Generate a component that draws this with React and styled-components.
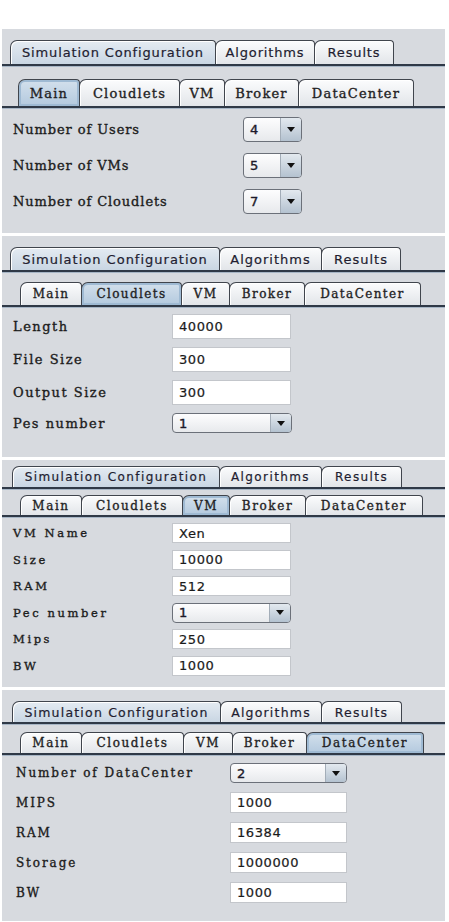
import React from "react";
import styled, { createGlobalStyle } from "styled-components";

const GlobalStyle = createGlobalStyle`
  html, body {
    margin: 0;
    padding: 0;
    background: #ffffff;
  }
  body {
    width: 449px;
    height: 922px;
    overflow: hidden;
  }
`;

const TOP_TABS = ["Simulation Configuration", "Algorithms", "Results"];
const SUB_TABS = ["Main", "Cloudlets", "VM", "Broker", "DataCenter"];

const screens = [
  {
    id: "main",
    height: 204,
    padTop: 11,
    topWidths: [206, 100, 80],
    topLeft: 8,
    topH: 24,
    topFont: 13,
    topSpacing: 0.85,
    subTop: 13,
    subWidths: [62, 101, 46, 75, 116],
    subLeft: 16,
    subH: 27,
    subFont: 13,
    subSpacing: 1.2,
    selected: 0,
    formTop: 9,
    labelLeft: 11,
    fieldLeft: 241,
    rowGap: 11,
    labelFont: 13,
    labelSpacing: 0.9,
    rows: [
      { label: "Number of Users", value: "4", combo: true, w: 59, h: 25 },
      { label: "Number of VMs", value: "5", combo: true, w: 59, h: 25 },
      { label: "Number of Cloudlets", value: "7", combo: true, w: 59, h: 25 },
    ],
  },
  {
    id: "cloudlets",
    height: 221,
    padTop: 11,
    topWidths: [210, 103, 80],
    topLeft: 8,
    topH: 23,
    topFont: 13,
    topSpacing: 1,
    subTop: 10,
    subWidths: [62, 101, 49, 76, 117],
    subLeft: 18,
    subH: 23,
    subFont: 12,
    subSpacing: 1.4,
    selected: 1,
    formTop: 7,
    labelLeft: 11,
    fieldLeft: 170,
    rowGap: 8,
    labelFont: 13,
    labelSpacing: 1.5,
    rows: [
      { label: "Length", value: "40000", w: 119, h: 25 },
      { label: "File Size", value: "300", w: 119, h: 25 },
      { label: "Output Size", value: "300", w: 119, h: 25 },
      { label: "Pes number", value: "1", combo: true, w: 120, h: 20 },
    ],
  },
  {
    id: "vm",
    height: 227,
    padTop: 6,
    topWidths: [208, 103, 81],
    topLeft: 10,
    topH: 21,
    topFont: 12,
    topSpacing: 1.4,
    subTop: 6,
    subWidths: [62, 102, 48, 77, 118],
    subLeft: 18,
    subH: 20,
    subFont: 12,
    subSpacing: 1.6,
    selected: 2,
    formTop: 6,
    labelLeft: 11,
    fieldLeft: 170,
    rowGap: 6.5,
    labelFont: 11.5,
    labelSpacing: 2.6,
    rows: [
      { label: "VM Name", value: "Xen", w: 119, h: 20 },
      { label: "Size", value: "10000", w: 119, h: 20 },
      { label: "RAM", value: "512", w: 119, h: 20 },
      { label: "Pec number", value: "1", combo: true, w: 119, h: 20 },
      { label: "Mips", value: "250", w: 119, h: 20 },
      { label: "BW", value: "1000", w: 119, h: 20 },
    ],
  },
  {
    id: "datacenter",
    height: 231,
    padTop: 11,
    topWidths: [209, 102, 81],
    topLeft: 10,
    topH: 21,
    topFont: 12.5,
    topSpacing: 1.2,
    subTop: 8,
    subWidths: [62, 103, 50, 75, 118],
    subLeft: 18,
    subH: 21,
    subFont: 12,
    subSpacing: 1.6,
    selected: 4,
    formTop: 8,
    labelLeft: 14,
    fieldLeft: 228,
    rowGap: 9,
    labelFont: 12,
    labelSpacing: 1.9,
    rows: [
      { label: "Number of DataCenter", value: "2", combo: true, w: 117, h: 20 },
      { label: "MIPS", value: "1000", w: 117, h: 21 },
      { label: "RAM", value: "16384", w: 117, h: 21 },
      { label: "Storage", value: "1000000", w: 117, h: 21 },
      { label: "BW", value: "1000", w: 117, h: 21 },
    ],
  },
];

const App = () => {
  return (
    <Page>
      <GlobalStyle />
      {screens.map((s) => (
        <Screen key={s.id} $height={s.height} $padTop={s.padTop}>
          <TabBar $left={s.topLeft}>
            {TOP_TABS.map((t, i) => (
              <Tab
                key={t}
                $w={s.topWidths[i]}
                $h={s.topH}
                $selected={i === 0}
                $first={i === 0}
              >
                <TopTabLabel $size={s.topFont} $spacing={s.topSpacing}>
                  {t}
                </TopTabLabel>
              </Tab>
            ))}
          </TabBar>

          <SubTabBar $left={s.subLeft} $top={s.subTop}>
            {SUB_TABS.map((t, i) => (
              <SubTab
                key={t}
                $w={s.subWidths[i]}
                $h={s.subH}
                $selected={i === s.selected}
                $first={i === 0}
              >
                <SubTabLabel $size={s.subFont} $spacing={s.subSpacing}>
                  {t}
                </SubTabLabel>
              </SubTab>
            ))}
          </SubTabBar>

          <Form $top={s.formTop} $left={s.labelLeft} $gap={s.rowGap}>
            {s.rows.map((r) => (
              <Row key={r.label}>
                <Label
                  $w={s.fieldLeft - s.labelLeft}
                  $size={s.labelFont}
                  $spacing={s.labelSpacing}
                >
                  {r.label}
                </Label>
                {r.combo ? (
                  <Combo $w={r.w} $h={r.h}>
                    <ComboValue>{r.value}</ComboValue>
                    <ArrowButton>
                      <Arrow />
                    </ArrowButton>
                  </Combo>
                ) : (
                  <TextField $w={r.w} $h={r.h}>
                    {r.value}
                  </TextField>
                )}
              </Row>
            ))}
          </Form>
        </Screen>
      ))}
    </Page>
  );
};

const Page = styled.div`
  display: flex;
  flex-direction: column;
  gap: 3px;
  padding: 29px 0 0 2px;
  width: 443px;
`;

const Screen = styled.section`
  height: ${({ $height }) => $height}px;
  padding-top: ${({ $padTop }) => $padTop}px;
  box-sizing: border-box;
  background: #d7dadf;
  overflow: hidden;
`;

const TabBar = styled.div`
  display: flex;
  align-items: flex-end;
  padding-left: ${({ $left }) => $left}px;
  border-bottom: 2px solid #2f3947;
  box-shadow: 0 1px 0 #a7b6c6;
`;

const Tab = styled.div`
  width: ${({ $w }) => $w}px;
  height: ${({ $h }) => $h}px;
  box-sizing: border-box;
  margin-left: ${({ $first }) => ($first ? 0 : -1)}px;
  display: flex;
  align-items: center;
  justify-content: center;
  border: 1px solid #40454d;
  border-bottom: none;
  border-radius: 7px 4px 0 0;
  background: ${({ $selected }) =>
    $selected
      ? "linear-gradient(#e4ebf2, #c9d6e3)"
      : "linear-gradient(#fbfcfd, #e2e5e9)"};
  box-shadow: inset 1px 1px 0 #ffffff;
`;

const TopTabLabel = styled.span`
  font-family: "DejaVu Sans", "Liberation Sans", sans-serif;
  font-size: ${({ $size }) => $size}px;
  letter-spacing: ${({ $spacing }) => $spacing}px;
  color: #221d30;
  -webkit-text-stroke: 0.2px #221d30;
  white-space: nowrap;
`;

const SubTabBar = styled(TabBar)`
  margin-top: ${({ $top }) => $top}px;
`;

const SubTab = styled(Tab)`
  background: ${({ $selected }) =>
    $selected
      ? "linear-gradient(#d3e0ec, #b3c9de)"
      : "linear-gradient(#fbfcfd, #e2e5e9)"};
  box-shadow: ${({ $selected }) =>
    $selected
      ? "inset 0 0 0 2px #9fbad3"
      : "inset 1px 1px 0 #ffffff"};
`;

const SubTabLabel = styled.span`
  font-family: "DejaVu Serif", "Liberation Serif", serif;
  font-size: ${({ $size }) => $size}px;
  letter-spacing: ${({ $spacing }) => $spacing}px;
  color: #1f1f24;
  -webkit-text-stroke: 0.35px #1f1f24;
  white-space: nowrap;
`;

const Form = styled.div`
  display: flex;
  flex-direction: column;
  gap: ${({ $gap }) => $gap}px;
  padding: ${({ $top }) => $top}px 0 0 ${({ $left }) => $left}px;
`;

const Row = styled.div`
  display: flex;
  align-items: center;
`;

const Label = styled.span`
  width: ${({ $w }) => $w}px;
  flex-shrink: 0;
  font-family: "DejaVu Serif", "Liberation Serif", serif;
  font-size: ${({ $size }) => $size}px;
  letter-spacing: ${({ $spacing }) => $spacing}px;
  color: #1c1c1c;
  -webkit-text-stroke: 0.35px #1c1c1c;
  white-space: nowrap;
`;

const TextField = styled.div`
  width: ${({ $w }) => $w}px;
  height: ${({ $h }) => $h}px;
  box-sizing: border-box;
  display: flex;
  align-items: center;
  padding-left: 6px;
  background: #ffffff;
  border: 1px solid #c3c6cb;
  font-family: "DejaVu Sans", "Liberation Sans", sans-serif;
  font-size: 13px;
  letter-spacing: 0.6px;
  color: #1a1a1a;
  -webkit-text-stroke: 0.2px #1a1a1a;
`;

const Combo = styled.div`
  width: ${({ $w }) => $w}px;
  height: ${({ $h }) => $h}px;
  box-sizing: border-box;
  display: flex;
  border: 1px solid #6b7079;
  border-radius: 4px;
  background: linear-gradient(#fdfdfe, #e7e9ec);
  overflow: hidden;
`;

const ComboValue = styled.span`
  flex: 1;
  display: flex;
  align-items: center;
  padding-left: 6px;
  font-family: "DejaVu Sans", "Liberation Sans", sans-serif;
  font-size: 13px;
  color: #1d1a2a;
  -webkit-text-stroke: 0.4px #1d1a2a;
`;

const ArrowButton = styled.span`
  width: 20px;
  display: flex;
  align-items: center;
  justify-content: center;
  border-left: 1px solid #a3adb8;
  background: linear-gradient(#e3e9ef, #b4c2d0);
`;

const Arrow = styled.span`
  width: 0;
  height: 0;
  border-left: 4px solid transparent;
  border-right: 4px solid transparent;
  border-top: 5px solid #111111;
`;

export default App;
